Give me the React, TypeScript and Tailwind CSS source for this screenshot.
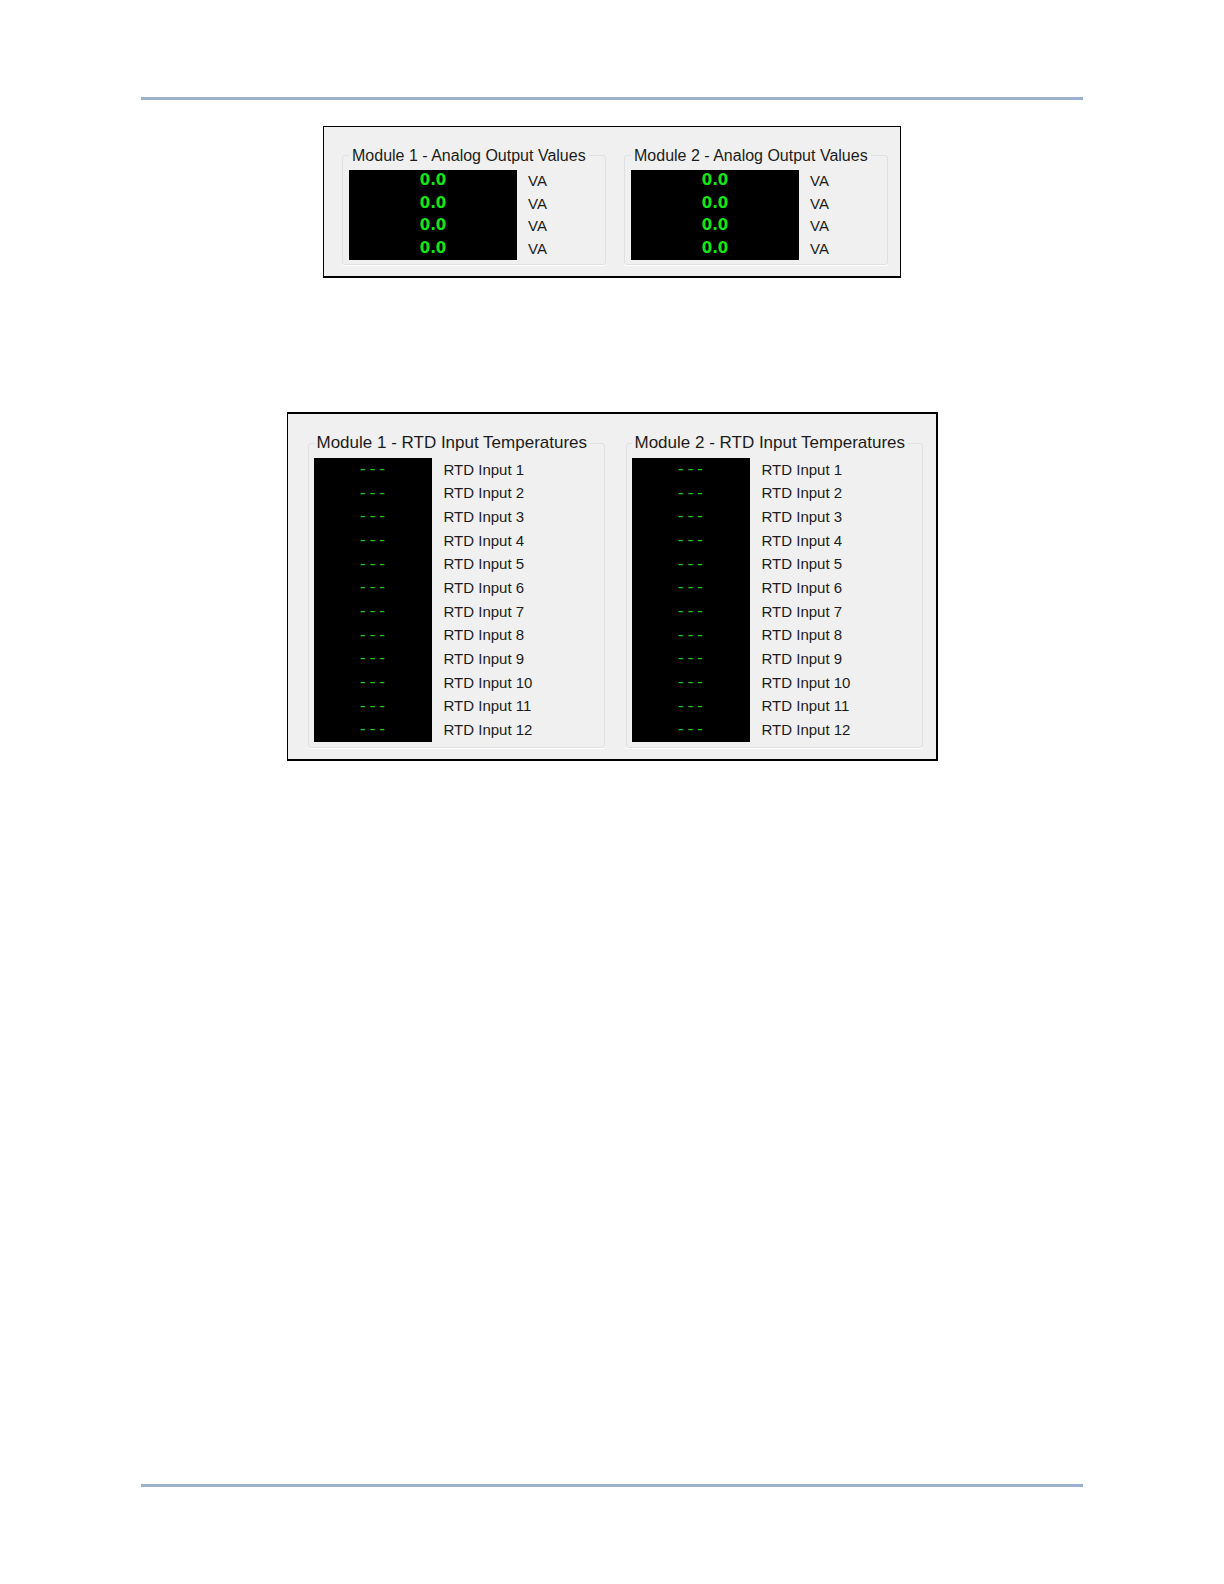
type Reading = { value: string; label: string };

type ModuleGroup = { id: string; title: string; readings: Reading[] };

const analogReadings: Reading[] = Array.from({ length: 4 }, () => ({ value: "0.0", label: "VA" }));

const rtdReadings: Reading[] = Array.from({ length: 12 }, (_, i) => ({
  value: "---",
  label: `RTD Input ${i + 1}`,
}));

const analogModules: ModuleGroup[] = [
  { id: "analog-1", title: "Module 1 - Analog Output Values", readings: analogReadings },
  { id: "analog-2", title: "Module 2 - Analog Output Values", readings: analogReadings },
];

const rtdModules: ModuleGroup[] = [
  { id: "rtd-1", title: "Module 1 - RTD Input Temperatures", readings: rtdReadings },
  { id: "rtd-2", title: "Module 2 - RTD Input Temperatures", readings: rtdReadings },
];

const etched = "min-w-0 rounded-[3px] border border-[#dde1e3] shadow-[0_1px_0_#ffffff]";

function AnalogGroup({ group }: { group: ModuleGroup }) {
  return (
    <fieldset className={`${etched} w-[264px] pb-1 pl-[6px]`}>
      <legend className="px-[3px] pt-[2px] text-[16px] leading-5">{group.title}</legend>
      <div className="flex gap-[11px] pt-1 text-[15px] leading-5">
        <div className="grid h-[90px] w-[168px] auto-rows-fr bg-black font-['DejaVu_Sans',sans-serif] text-[15px] font-bold text-[#14e614]">
          {group.readings.map((r, i) => (
            <output key={i} aria-labelledby={`${group.id}-${i}`} className="flex justify-center">
              {r.value}
            </output>
          ))}
        </div>
        <div className="grid h-[90px] auto-rows-fr">
          {group.readings.map((r, i) => (
            <span key={i} id={`${group.id}-${i}`} className="flex items-center">
              {r.label}
            </span>
          ))}
        </div>
      </div>
    </fieldset>
  );
}

function RtdGroup({ group }: { group: ModuleGroup }) {
  return (
    <fieldset className={`${etched} w-[297px] pb-[5px] pl-[5px]`}>
      <legend className="px-[3px] text-[17px] leading-5">{group.title}</legend>
      <div className="flex gap-3 pt-[5px] text-[15px] leading-5">
        <div className="grid h-[284px] w-[118px] auto-rows-fr bg-black font-['Liberation_Mono',monospace] text-[16px] leading-6 text-[#22c322]">
          {group.readings.map((r, i) => (
            <output key={i} aria-labelledby={`${group.id}-${i}`} className="flex justify-center">
              {r.value}
            </output>
          ))}
        </div>
        <div className="grid h-[284px] auto-rows-fr">
          {group.readings.map((r, i) => (
            <span key={i} id={`${group.id}-${i}`} className="flex items-center">
              {r.label}
            </span>
          ))}
        </div>
      </div>
    </fieldset>
  );
}

export default function App() {
  return (
    <div className="flex min-h-screen flex-col bg-white px-[141px] py-[97px] font-['Liberation_Sans',Arial,sans-serif] text-[#1c1c20]">
      <hr className="border-0 border-t-[3px] border-[#9ab1d0]" />
      <main className="flex grow flex-col items-center pt-[26px]">
        <section
          aria-label="Analog output values"
          className="flex gap-[18px] border border-b-2 border-black bg-[#f0f0f0] pt-[17px] pr-3 pb-[11px] pl-[18px]"
        >
          {analogModules.map((g) => (
            <AnalogGroup key={g.id} group={g} />
          ))}
        </section>
        <section
          aria-label="RTD input temperatures"
          className="mt-[134px] flex gap-[21px] border-2 border-l border-black bg-[#f0f0f0] pt-[19px] pr-[13px] pb-[11px] pl-5"
        >
          {rtdModules.map((g) => (
            <RtdGroup key={g.id} group={g} />
          ))}
        </section>
      </main>
      <hr className="border-0 border-t-[3px] border-[#9ab1d0]" />
    </div>
  );
}
